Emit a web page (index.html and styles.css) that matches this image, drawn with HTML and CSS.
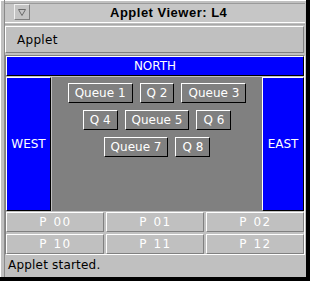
FILE: index.html
```html
<!DOCTYPE html>
<html>
<head>
<meta charset="utf-8">
<link rel="stylesheet" href="styles.css">
</head>
<body>
<div class="window">
  <div class="main">
    <div class="titlebar">
      <div class="menu-btn">
        <svg width="14" height="14" viewBox="0 0 14 14"><polygon points="3.5,4.5 10.5,4.5 7,10.5" fill="none" stroke="#6a6a6a" stroke-width="1"/></svg>
      </div>
      <div class="title">Applet Viewer: L4</div>
    </div>
    <div class="sep"></div>
    <div class="menubar">Applet</div>
    <div class="applet">
      <div class="north blue">NORTH</div>
      <div class="middle">
        <div class="west blue">WEST</div>
        <div class="center">
          <div class="qbtn">Queue 1</div>
          <div class="qbtn">Q 2</div>
          <div class="qbtn">Queue 3</div>
          <div class="qbtn">Q 4</div>
          <div class="qbtn">Queue 5</div>
          <div class="qbtn">Q 6</div>
          <div class="qbtn">Queue 7</div>
          <div class="qbtn">Q 8</div>
        </div>
        <div class="east blue">EAST</div>
      </div>
      <div class="grid">
        <div class="pbtn">P 00</div>
        <div class="pbtn">P 01</div>
        <div class="pbtn">P 02</div>
        <div class="pbtn">P 10</div>
        <div class="pbtn">P 11</div>
        <div class="pbtn">P 12</div>
      </div>
    </div>
    <div class="status">Applet started.</div>
  </div>
</div>
</body>
</html>
```
FILE: styles.css
```css
html, body {
  margin: 0;
  padding: 0;
  background: #c0c0c0;
}
.window {
  width: 310px;
  height: 281px;
  box-sizing: border-box;
  border-right: 4px solid #000;
  border-bottom: 4px solid #000;
  padding: 0 1px 0 4px;
  background: #c0c0c0;
  box-shadow: inset 1px 1px 0 #ffffff;
  font-family: "DejaVu Sans", sans-serif;
  font-size: 12px;
  color: #000;
}
.main {
  height: 277px;
  border-left: 1px solid #8a8a8a;
  display: flex;
  flex-direction: column;
  padding-top: 3px;
  box-sizing: border-box;
}
.titlebar {
  height: 18px;
  border-top: 1px solid #9a9a9a;
  background: #c6c6c6;
  display: flex;
  align-items: flex-start;
}
.menu-btn {
  margin-left: 9px;
  width: 14px;
  height: 14px;
  border-top: 1px solid #f0f0f0;
  border-left: 1px solid #f0f0f0;
  border-right: 1px solid #808080;
  border-bottom: 1px solid #808080;
  background: #c4c4c4;
  display: flex;
}
.title {
  margin-left: 80px;
  margin-top: 1px;
  font-family: "Liberation Sans", Arial, sans-serif;
  font-weight: bold;
  font-size: 13px;
  line-height: 15px;
  letter-spacing: 0.5px;
}
.sep {
  height: 1px;
  border-top: 1px solid #ffffff;
  border-bottom: 1px solid #a8a8a8;
  margin-bottom: 1px;
  background: #c0c0c0;
}
.menubar {
  border-top: 1px solid #ffffff;
  border-left: 1px solid #ffffff;
  border-right: 1px solid #808080;
  border-bottom: 1px solid #808080;
  margin-right: 1px;
  padding: 6px 0 0 11px;
  box-sizing: content-box;
  height: 19px;
  line-height: 14px;
  letter-spacing: 0.3px;
}
.applet {
  margin-top: 2px;
  height: 198px;
  border-top: 1px solid #808080;
  border-left: 1px solid #808080;
  border-right: 1px solid #ffffff;
  border-bottom: 1px solid #ffffff;
  display: flex;
  flex-direction: column;
  gap: 1px;
}
.blue {
  background: #0000ff;
  color: #ffffff;
  box-sizing: border-box;
  border-top: 1px solid #ffffff;
  border-left: 1px solid #ffffff;
  border-right: 1px solid #000000;
  border-bottom: 1px solid #000000;
  display: flex;
  align-items: center;
  justify-content: center;
}
.north {
  height: 20px;
}
.middle {
  height: 134px;
  display: flex;
}
.west {
  width: 45px;
  margin-right: 1px;
}
.east {
  width: 42px;
}
.center {
  width: 210px;
  background: #808080;
  display: flex;
  flex-wrap: wrap;
  justify-content: center;
  align-content: flex-start;
  gap: 7px;
  padding-top: 6px;
  box-sizing: border-box;
}
.qbtn {
  height: 20px;
  box-sizing: border-box;
  padding: 0 6px;
  border-top: 1px solid #ffffff;
  border-left: 1px solid #ffffff;
  border-right: 1px solid #000000;
  border-bottom: 1px solid #000000;
  color: #ffffff;
  display: flex;
  align-items: center;
  line-height: 14px;
}
.grid {
  display: grid;
  grid-template-columns: 98px 98px 98px;
  grid-template-rows: 20px 20px;
  column-gap: 2px;
  row-gap: 2px;
}
.pbtn {
  box-sizing: border-box;
  border-top: 1px solid #ffffff;
  border-left: 1px solid #ffffff;
  border-right: 1px solid #808080;
  border-bottom: 1px solid #808080;
  background: #c0c0c0;
  color: #ffffff;
  letter-spacing: 1.5px;
  padding-left: 1px;
  display: flex;
  align-items: center;
  justify-content: center;
  line-height: 14px;
}
.status {
  padding: 3px 0 0 3px;
  line-height: 14px;
  letter-spacing: 0.2px;
}
```
